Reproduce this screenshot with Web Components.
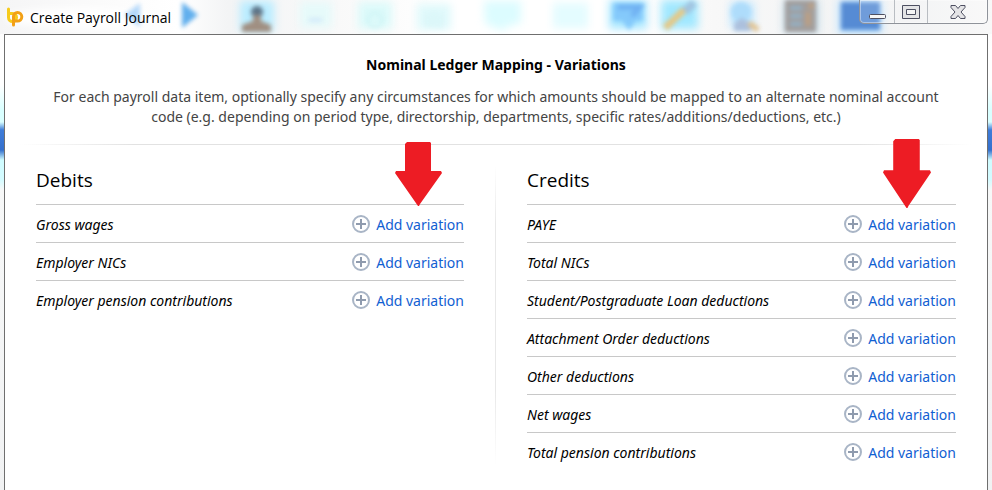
<!DOCTYPE html>
<html lang="en">
<head>
<meta charset="utf-8">
<title>Create Payroll Journal</title>
<style>
	html, body {
		height: 100%;
	}

	body {
		margin: 0;
		font-family: "Noto Sans", "Open Sans", sans-serif;
		font-size: 14px;
		line-height: 20px;
		color: #000;
	}
</style>
</head>
<body>
<payroll-window>
	<span slot="title">Create Payroll Journal</span>
	<mapping-header>
		<span slot="heading">Nominal Ledger Mapping - Variations</span>
		For each payroll data item, optionally specify any circumstances for which amounts should be mapped to an alternate nominal account code (e.g. depending on period type, directorship, departments, specific rates/additions/deductions, etc.)
	</mapping-header>
	<mapping-columns>
		<mapping-column>
			<span slot="heading">Debits</span>
			<pointer-arrow slot="pointer"></pointer-arrow>
			<mapping-item>Gross wages</mapping-item>
			<mapping-item>Employer NICs</mapping-item>
			<mapping-item>Employer pension contributions</mapping-item>
		</mapping-column>
		<mapping-column>
			<span slot="heading">Credits</span>
			<pointer-arrow slot="pointer" large></pointer-arrow>
			<mapping-item>PAYE</mapping-item>
			<mapping-item>Total NICs</mapping-item>
			<mapping-item>Student/Postgraduate Loan deductions</mapping-item>
			<mapping-item>Attachment Order deductions</mapping-item>
			<mapping-item>Other deductions</mapping-item>
			<mapping-item>Net wages</mapping-item>
			<mapping-item>Total pension contributions</mapping-item>
		</mapping-column>
	</mapping-columns>
</payroll-window>

<script>
class GlassBackdrop extends HTMLElement {
	constructor() {
		super();
		this.attachShadow({ mode: 'open' });
		this.shadowRoot.innerHTML = `
		<style>
			:host {
				display: block;
				overflow: hidden;
				background: linear-gradient(90deg, #f5f5f6, #fbfbfb 10%, #fff 18%, #f3f4f5 23%, #fafafa 36%, #fff 45%, #fff 63%, #f8f8f8 72%, #f2f3f4 92%, #f8f8f8);
			}

			svg { display: block; }
		</style>
		<svg width="992" height="34" viewBox="0 0 992 34" aria-hidden="true">
			<defs>
				<filter id="soft" x="-20%" y="-50%" width="140%" height="200%" color-interpolation-filters="sRGB"><feGaussianBlur stdDeviation="2"/></filter>
				<filter id="haze" x="-20%" y="-50%" width="140%" height="200%" color-interpolation-filters="sRGB"><feGaussianBlur stdDeviation="4"/></filter>
			</defs>
			<g filter="url(#haze)">
				<ellipse cx="80" cy="18" rx="75" ry="10" fill="#fff"/>
				<rect x="240" y="1" width="34" height="30" fill="#b9ecff"/>
				<rect x="300" y="2" width="32" height="26" fill="#e6fafa"/>
				<rect x="358" y="2" width="34" height="27" fill="#dcfafa"/>
				<rect x="417" y="4" width="34" height="26" fill="#e0f9fb"/>
				<path d="M484 1h37v22l-13 3-4 5-19-7z" fill="#dcfcff"/>
				<rect x="553" y="3" width="35" height="25" fill="#e4fcff"/>
				<rect x="609" y="0" width="38" height="29" fill="#a8e7ff"/>
				<rect x="661" y="0" width="37" height="29" fill="#a1e8ff"/>
				<rect x="730" y="2" width="24" height="26" fill="#c0e7ff"/>
				<rect x="783" y="0" width="36" height="33" fill="#c5dbe7"/>
				<rect x="838" y="0" width="44" height="34" fill="#bce3ff"/>
			</g>
			<g filter="url(#soft)">
				<path d="M140 3v24l-16-12z" fill="#b4d8fa"/>
				<path d="M182 2v26l16-13z" fill="#61afed"/>
				<circle cx="257" cy="12" r="6" fill="#5d7488"/>
				<path d="M253 15h8v6l10 4v7h-29v-7l11-4z" fill="#a08f82"/>
				<path d="M309 20h13" stroke="#d3e9f9" stroke-width="4"/>
				<circle cx="375" cy="20" r="7" fill="none" stroke="#d0f5f6" stroke-width="3"/>
				<path d="M428 15v12M434 12v16M440 15v13" stroke="#d8f5f7" stroke-width="3"/>
				<path d="M613 3h30v18h-7l-7 9-7-9h-9z" fill="#84c9fb"/>
				<path d="M618 7h22l-8 9" fill="none" stroke="#70b1f2" stroke-width="5"/>
				<path d="M665 28l20-19" stroke="#e4c887" stroke-width="7"/>
				<path d="M682 8l9-8 6 5-9 10z" fill="#a2c4e0"/>
				<circle cx="741" cy="12" r="10" fill="#aedcfb"/>
				<path d="M734 23l8-5 9 5v8h-17z" fill="#acc0dd"/>
				<path d="M749 23l9 7" stroke="#e2c595" stroke-width="6"/>
				<rect x="785" y="0" width="31" height="32" fill="#a19d9c"/>
				<path d="M790 8h12M790 16h12M790 24h12" stroke="#93b2c8" stroke-width="4"/>
				<path d="M808 12v14M811 3v6" stroke="#bda083" stroke-width="5"/>
				<rect x="841" y="2" width="39" height="28" fill="#568bd4"/>
			</g>
		</svg>
		`
	}
}
customElements.define('glass-backdrop', GlassBackdrop);

class WindowControls extends HTMLElement {
	constructor() {
		super();
		this.attachShadow({ mode: 'open' });
		this.shadowRoot.innerHTML = `
		<style>
			:host {
				display: flex;
				box-sizing: border-box;
				height: 24px;
				border: 1px solid #8f939a;
				border-top: 0;
				border-radius: 0 0 5px 5px;
				background: rgba(255,255,255,0.15);
				box-shadow: inset 0 0 0 1px rgba(255,255,255,0.4);
				overflow: hidden;
			}

			button {
				display: grid;
				place-items: center;
				width: 33px;
				padding: 0;
				border: 0;
				border-right: 1px solid #b9bdc2;
				background: none;
			}

			button.min { width: 35px; }

			button.close {
				width: 59px;
				border-right: 0;
			}

			button:hover { background: rgba(170,210,245,0.5); }

			svg { display: block; }
		</style>
		<button class="min" aria-label="Minimize">
			<svg width="18" height="20" viewBox="0 0 18 20"><rect x="1.5" y="12.5" width="16" height="4" rx="1" fill="#f6f6f6" stroke="#4d4f61"/></svg>
		</button>
		<button aria-label="Maximize">
			<svg width="18" height="20" viewBox="0 0 18 20"><path d="M.5 3.500h17v13H.5zM4.500 7.500v5h9v-5z" fill="#e4e4e6" fill-rule="evenodd" stroke="#4d4f61"/></svg>
		</button>
		<button class="close" aria-label="Close">
			<svg width="16" height="20" viewBox="0 0 16 20"><path d="M1 3.500h4.500L8 6.500l2.500-3H15v2L11 10l4 4.500v2h-4.500L8 13.500l-2.500 3H1v-2L5 10 1 5.500z" fill="#e4e4e6" stroke="#4d4f61" stroke-linejoin="round"/></svg>
		</button>
		`
	}
}
customElements.define('window-controls', WindowControls);

class PayrollWindow extends HTMLElement {
	constructor() {
		super();
		this.attachShadow({ mode: 'open' });
		this.shadowRoot.innerHTML = `
		<style>
			:host {
				position: relative;
				display: flex;
				flex-direction: column;
				box-sizing: border-box;
				min-height: 100%;
				padding: 0 4px;
				background: linear-gradient(#f7f7f7, #fff 50px, #fff 85px, #d9ffff 110px, #d9ffff 122px, #3f7cd8 130px, #3470cd 150px, #cffcff 160px, #d4fbff 180px, #f7f8f8 190px, #f1f2f3);
			}

			glass-backdrop {
				position: absolute;
				top: 0;
				left: 0;
				right: 0;
			}

			.titlebar {
				position: relative;
				display: flex;
				align-items: flex-start;
				height: 34px;
			}

			.logo {
				margin: 6px 6px 0 2px;
			}

			.title {
				flex: 1;
				margin: 0;
				padding-top: 8px;
				font-family: "Open Sans", "Noto Sans", sans-serif;
				font-size: 14px;
				font-weight: 400;
				line-height: 20px;
			}

			main {
				flex: 1;
				border: 1px solid #6f6f6f;
				border-bottom: 0;
				padding: 0 15px;
				background: #fff;
			}
		</style>
		<glass-backdrop></glass-backdrop>
		<header class="titlebar">
			<svg class="logo" width="18" height="22" viewBox="0 0 18 22" aria-hidden="true">
				<g fill="none" stroke-width="3" stroke-linecap="round">
					<path d="M2.500 3v8.500a4 4 0 0 0 8 0a4 4 0 0 0-4-4h-3" stroke="#f6cb1c"/>
					<path d="M7.500 19V10.500a4 4 0 0 1 4-4a4.300 4.300 0 0 1 0 8.600h-3" stroke="#f2a016"/>
				</g>
			</svg>
			<h1 class="title"><slot name="title"></slot></h1>
			<window-controls></window-controls>
		</header>
		<main><slot></slot></main>
		`
	}
}
customElements.define('payroll-window', PayrollWindow);

class MappingHeader extends HTMLElement {
	constructor() {
		super();
		this.attachShadow({ mode: 'open' });
		this.shadowRoot.innerHTML = `
		<style>
			:host {
				display: block;
				text-align: center;
			}

			h2 {
				margin: 0;
				padding: 20px 0 12px;
				font-size: 14px;
				font-weight: 700;
				line-height: 20px;
			}

			p {
				margin: 0;
				padding: 0 16px 17px;
				color: #444;
			}

			.rule {
				height: 1px;
				background: linear-gradient(90deg, transparent, #e2e2e2 12%, #e2e2e2 88%, transparent);
			}
		</style>
		<h2><slot name="heading"></slot></h2>
		<p><slot></slot></p>
		<div class="rule"></div>
		`
	}
}
customElements.define('mapping-header', MappingHeader);

class MappingColumns extends HTMLElement {
	constructor() {
		super();
		this.attachShadow({ mode: 'open' });
		this.shadowRoot.innerHTML = `
		<style>
			:host {
				display: grid;
				grid-template-columns: 1fr 1fr;
				padding-top: 19px;
				background: linear-gradient(transparent, #e8e8e8 20%, #e8e8e8 75%, transparent) calc(50% - 1px) 20px / 1px 300px no-repeat;
			}

			::slotted(*) {
				padding: 0 32px 0 16px;
			}

			::slotted(:last-child) {
				padding: 0 16px 0 31px;
			}
		</style>
		<slot></slot>
		`
	}
}
customElements.define('mapping-columns', MappingColumns);

class MappingColumn extends HTMLElement {
	constructor() {
		super();
		this.attachShadow({ mode: 'open' });
		this.shadowRoot.innerHTML = `
		<style>
			:host {
				display: block;
			}

			.head {
				position: relative;
				padding: 2px 0 10px;
			}

			h3 {
				margin: 0;
				font-family: "Open Sans", "Noto Sans", sans-serif;
				font-size: 19px;
				font-weight: 400;
				line-height: 28px;
			}

			/* lies over the heading and points at the first link */
			::slotted(pointer-arrow) {
				position: absolute;
				right: 22px;
				bottom: -2px;
			}

			::slotted(pointer-arrow[large]) {
				right: 25px;
				bottom: -4px;
			}
		</style>
		<div class="head">
			<h3><slot name="heading"></slot></h3>
			<slot name="pointer"></slot>
		</div>
		<div role="list"><slot></slot></div>
		`
	}
}
customElements.define('mapping-column', MappingColumn);

class MappingItem extends HTMLElement {
	constructor() {
		super();
		this.attachShadow({ mode: 'open' });
		this.shadowRoot.innerHTML = `
		<style>
			:host {
				display: flex;
				align-items: center;
				justify-content: space-between;
				box-sizing: border-box;
				height: 38px;
				padding-top: 3px;
				border-top: 1px solid #c8c8c8;
			}

			.name {
				font-style: italic;
			}

			a {
				display: flex;
				align-items: flex-start;
				gap: 6px;
				color: #1160d2;
				text-decoration: none;
			}

			a:hover {
				text-decoration: underline;
			}

			svg {
				display: block;
			}
		</style>
		<span class="name"><slot></slot></span>
		<a href="#add">
			<svg width="18" height="18" viewBox="0 0 18 18" aria-hidden="true">
				<circle cx="9" cy="9" r="8" fill="none" stroke="#a9b5c6" stroke-width="2"/>
				<path d="M4 9h10M9 4v10" stroke="#8f9bae" stroke-width="2"/>
			</svg>
			<span>Add variation</span>
		</a>
		`
	}
	connectedCallback() {
		this.setAttribute('role', 'listitem');
	}
}
customElements.define('mapping-item', MappingItem);

class PointerArrow extends HTMLElement {
	constructor() {
		super();
		this.attachShadow({ mode: 'open' });
		this.shadowRoot.innerHTML = `
		<style>
			:host {
				display: block;
				width: 47px;
				height: 64px;
			}

			:host([large]) {
				width: 48px;
				height: 69px;
			}

			svg {
				display: block;
				width: 100%;
				height: 100%;
			}
		</style>
		<svg viewBox="0 0 47 64" preserveAspectRatio="none" aria-hidden="true">
			<path d="M12 0h23l1 1v28h10l1 2-22 31-1 2h-1L0 31l1-2h9V2z" fill="#ed1c24"/>
		</svg>
		`
	}
}
customElements.define('pointer-arrow', PointerArrow);
</script>
</body>
</html>
